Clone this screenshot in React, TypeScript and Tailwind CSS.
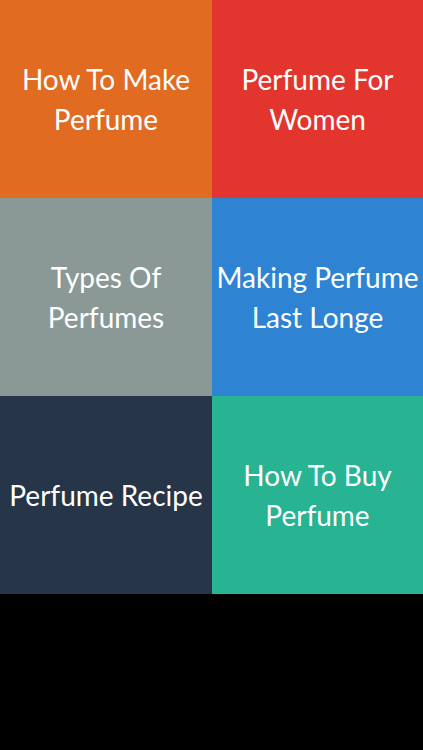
const TILES = [
  { lines: ["How To Make", "Perfume"], bg: "bg-[#e26b22]" },
  { lines: ["Perfume For", "Women"], bg: "bg-[#e2352d]" },
  { lines: ["Types Of", "Perfumes"], bg: "bg-[#8a9896]" },
  { lines: ["Making Perfume", "Last Longe"], bg: "bg-[#2e84d2]" },
  { lines: ["Perfume Recipe"], bg: "bg-[#263547]" },
  { lines: ["How To Buy", "Perfume"], bg: "bg-[#28b393]" },
];

export default function App() {
  return (
    <div className="w-[423px] h-[750px] bg-black font-['Lato',sans-serif]">
      <div className="grid grid-cols-[212px_211px] grid-rows-[198px_198px_198px]">
        {TILES.map((t) => (
          <div
            key={t.lines.join(" ")}
            className={`${t.bg} flex flex-col items-center justify-center text-center text-white text-[28px] leading-[40px] whitespace-nowrap`}
          >
            {t.lines.map((l) => (
              <span key={l}>{l}</span>
            ))}
          </div>
        ))}
      </div>
    </div>
  );
}
